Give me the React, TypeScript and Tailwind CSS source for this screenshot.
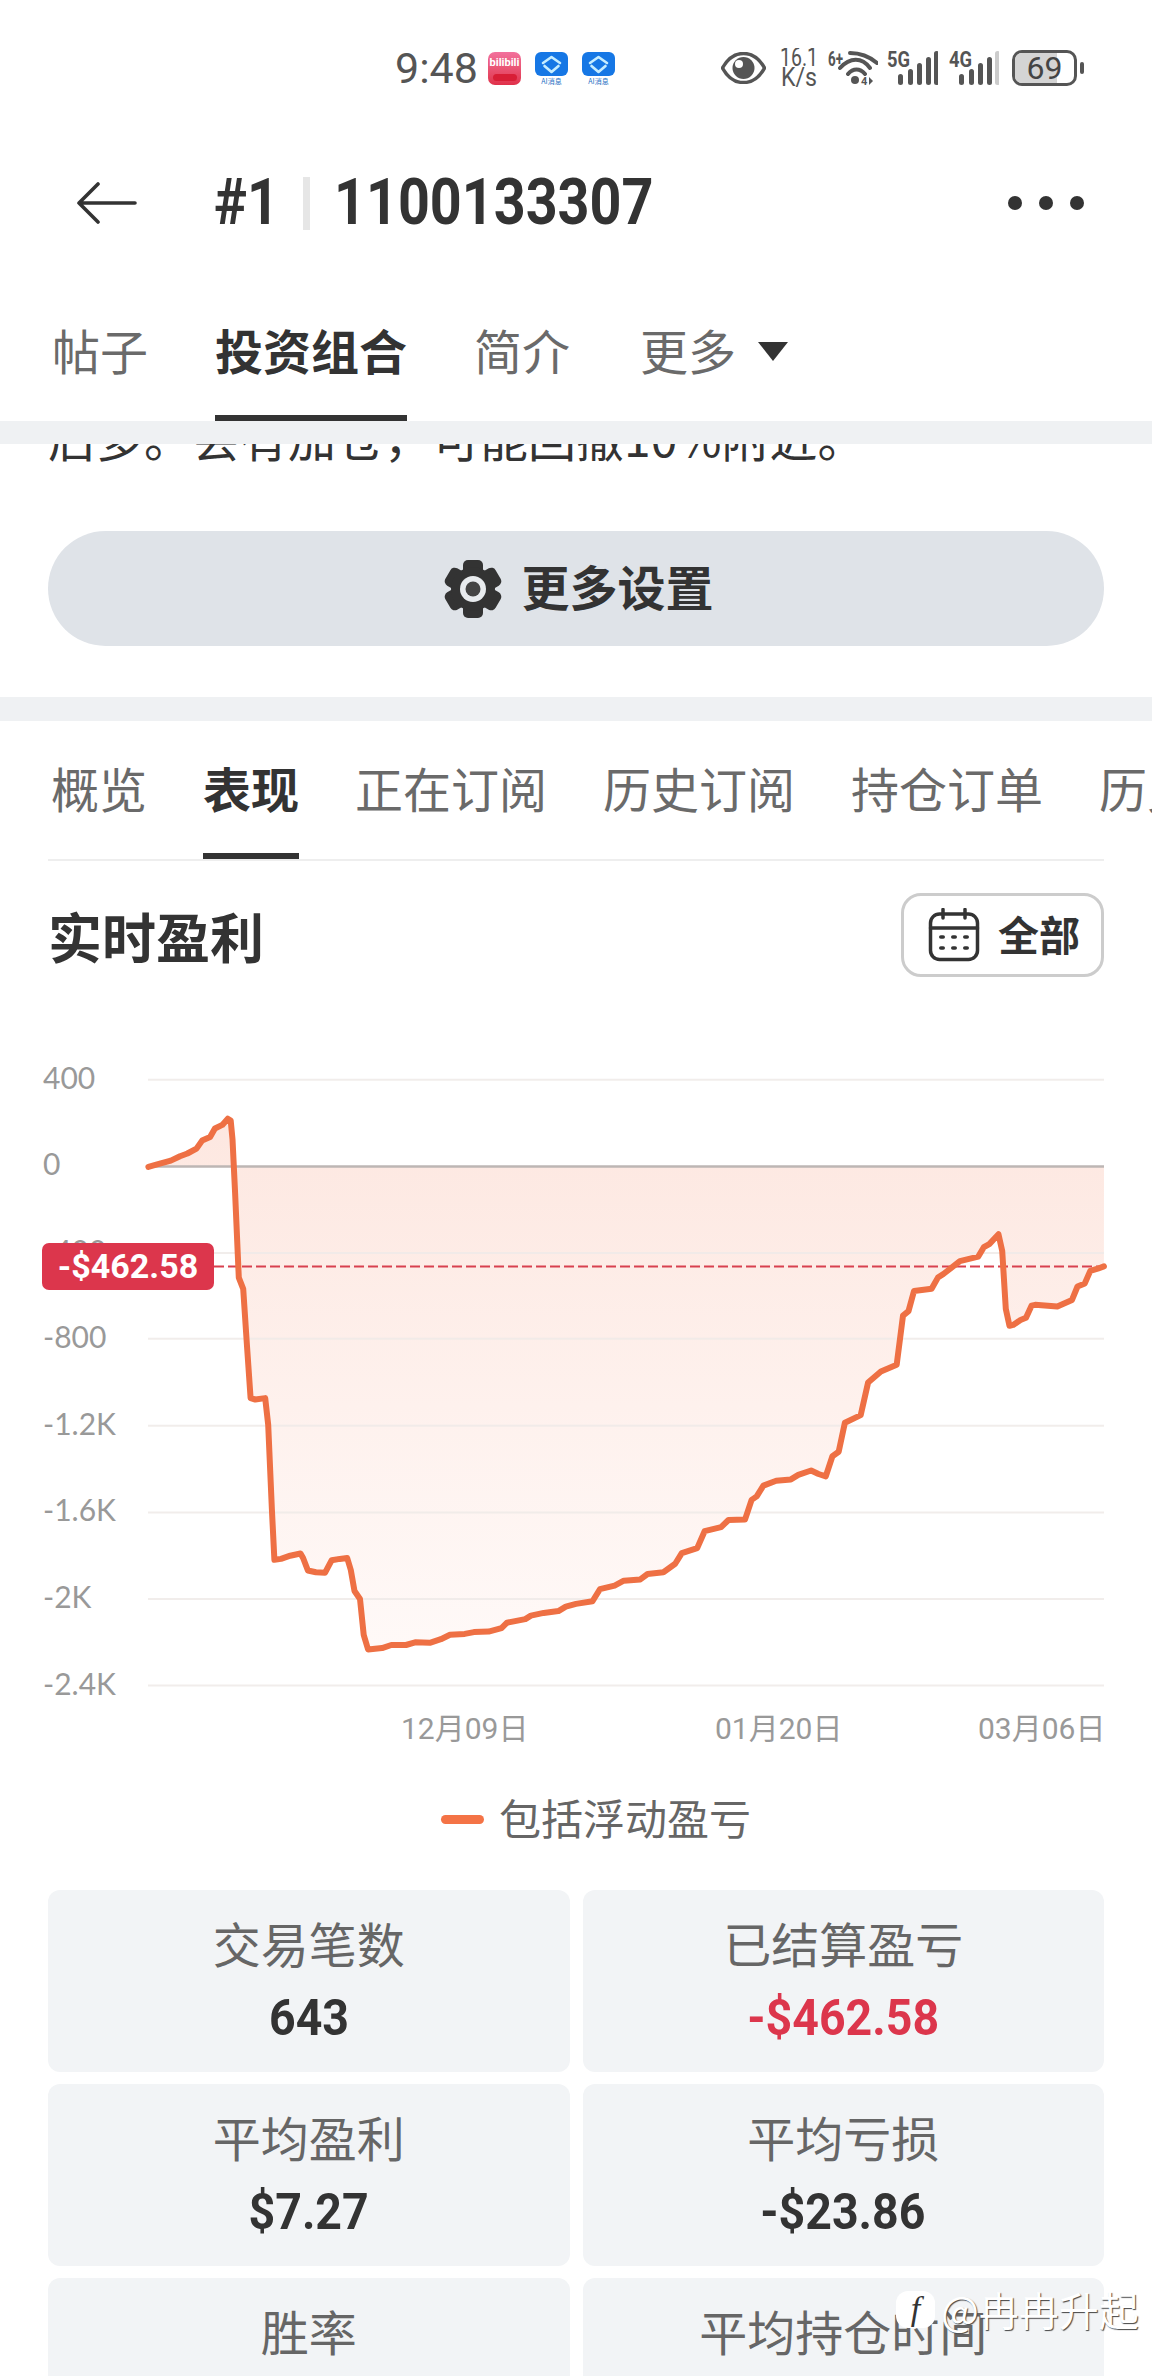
const CJK = "font-['Noto_Sans_CJK_SC','Noto_Sans',sans-serif]"

// Points read off the reference, in crop coordinates
const LEFT_PTS = [
  [404, 282], [430, 276], [465, 268], [490, 258], [510, 252], [535, 241], [550, 223], [572, 215], [585, 196], [605, 188],
  [620, 174], [628, 178], [633, 220], [640, 340], [650, 530], [662, 555], [672, 680], [682, 800], [695, 803], [722, 800],
  [730, 860], [740, 1050], [747, 1162], [765, 1160], [790, 1153], [818, 1148], [825, 1158], [838, 1186], [860, 1190], [885, 1191],
  [903, 1163], [925, 1160], [945, 1158], [955, 1185], [965, 1232], [980, 1250], [990, 1330], [1002, 1363], [1040, 1360], [1065, 1353],
  [1105, 1353], [1130, 1347], [1170, 1348], [1200, 1340], [1225, 1330], [1265, 1328], [1290, 1324], [1330, 1323], [1365, 1315], [1380, 1303],
  [1430, 1295], [1445, 1287], [1480, 1281], [1520, 1277], [1540, 1267],
]
const RIGHT_PTS = [
  [0, 1261], [45, 1255], [65, 1228], [105, 1220], [130, 1209], [175, 1206], [195, 1194], [238, 1190], [270, 1171], [288, 1147],
  [330, 1136], [350, 1098], [395, 1089], [415, 1073], [460, 1072], [478, 1028], [492, 1020], [510, 996], [545, 985], [585, 982],
  [605, 972], [640, 962], [660, 970], [680, 975], [698, 930], [715, 920], [732, 855], [775, 838], [795, 765], [830, 740],
  [873, 725], [890, 615], [905, 605], [920, 560], [968, 555], [985, 530], [1000, 522], [1045, 493], [1095, 483], [1110, 462],
  [1125, 455], [1150, 433], [1160, 470], [1170, 600], [1180, 638], [1190, 636], [1210, 625], [1225, 620], [1240, 593], [1250, 591],
  [1310, 595], [1350, 580], [1365, 550], [1385, 543], [1400, 515], [1420, 510], [1437, 505],
]

const line = [
  ...LEFT_PTS.map(([x, y]) => [x / 2.722, y / 2.24 - 20]),
  ...RIGHT_PTS.map(([x, y]) => [576 + x / 2.722, y / 2.24 - 20]),
]
const linePts = line.map(([x, y]) => `${x.toFixed(1)},${y.toFixed(1)}`).join(" ")
const ZERO_Y = 105.4
const areaPts = `${linePts} 1104,${ZERO_Y} 148,${ZERO_Y}`

const GRID = [
  { y: 18.8, label: "400" },
  { y: 105.4, label: "0" },
  { y: 192, label: "-400" },
  { y: 277.8, label: "-800" },
  { y: 364.8, label: "-1.2K" },
  { y: 451.4, label: "-1.6K" },
  { y: 538, label: "-2K" },
  { y: 624.6, label: "-2.4K" },
]

function Bars({ dim }: { dim?: boolean }) {
  const xs = [2, 12, 21, 30, 38]
  const hs = [11, 16, 22, 28, 34]
  return (
    <svg width="42" height="36" viewBox="0 0 42 36">
      {xs.map((x, i) => (
        <rect key={x} x={x} y={35 - hs[i]} width="5" height={hs[i]} rx="2.5" fill={dim && i === 4 ? "#ccc" : "#555"} />
      ))}
    </svg>
  )
}

function StatusBar() {
  return (
    <div className="flex h-[136px] items-center pl-[395px] text-[#555]">
      <span className="w-[80px] font-['Roboto',sans-serif] text-[43px] leading-none">9:48</span>
      <div className="ml-[13px] flex h-[33px] w-[33px] flex-col items-center overflow-hidden rounded-[7px] bg-gradient-to-b from-[#f2709c] to-[#e0304a]">
        <span className="mt-[5px] font-['Roboto',sans-serif] text-[11px] leading-[12px] font-bold text-white">bilibili</span>
        <span className="mt-[5px] h-[7px] w-[24px] rounded-sm bg-[#d81e36]" />
      </div>
      {[0, 1].map((i) => (
        <div key={i} className="ml-[14px] flex h-[33px] w-[33px] flex-col items-center">
          <svg width="33" height="24" viewBox="0 0 33 24">
            <rect width="33" height="24" rx="6" fill="#1677e5" />
            <path d="M8 11 16.5 5 25 11M9.5 14 16.5 20 23.5 14" fill="none" stroke="#c6edff" strokeWidth="2.6" strokeLinecap="round" strokeLinejoin="round" />
          </svg>
          <span className={`${CJK} mt-[1px] text-[7px] leading-[8px] whitespace-nowrap text-[#1f6fc4]`}>AI消息</span>
        </div>
      ))}
      <svg className="ml-[106px]" width="45" height="32" viewBox="0 0 45 32">
        <path d="M1.5 16C7 6 14 1.5 22.5 1.5S38 6 43.5 16C38 26 31 30.5 22.5 30.5S7 26 1.5 16Z" fill="none" stroke="#555" strokeWidth="3.5" strokeLinejoin="round" />
        <circle cx="22.5" cy="16" r="11" fill="#555" />
        <circle cx="18" cy="12" r="4" fill="#fff" />
      </svg>
      <svg className="ml-[14px]" width="38" height="40" viewBox="0 0 38 40">
        <text x="0" y="18" fontSize="25" fontFamily="Roboto, sans-serif" textLength="38" lengthAdjust="spacingAndGlyphs" fill="#555">16.1</text>
        <text x="1" y="38" fontSize="25" fontFamily="Roboto, sans-serif" textLength="36" lengthAdjust="spacingAndGlyphs" fill="#555">K/s</text>
      </svg>
      <svg className="ml-[10px]" width="50" height="36" viewBox="0 0 50 36">
        <text x="0" y="16" fontSize="20" fontWeight="700" fontFamily="Roboto, sans-serif" textLength="15" lengthAdjust="spacingAndGlyphs" fill="#555">6+</text>
        <path d="M22 3C32 3 42 7 49 13M12 18C22 7 34 7 42 18M20 24C25 18 32 18 37 24" fill="none" stroke="#555" strokeWidth="4" strokeLinecap="round" />
        <circle cx="27" cy="30" r="4" fill="#555" />
        <text x="33" y="35" fontSize="11" fontWeight="700" fontFamily="Roboto, sans-serif" fill="#555">4</text>
        <path d="M41 27v8l4-4z" fill="#555" />
      </svg>
      <div className="relative ml-[9px] h-[36px] w-[52px]">
        <div className="absolute top-0 left-[9px]"><Bars /></div>
        <svg className="absolute top-0 left-0" width="26" height="20" viewBox="0 0 26 20">
          <text x="0" y="17" fontSize="22" fontWeight="700" fontFamily="Roboto, sans-serif" textLength="23" lengthAdjust="spacingAndGlyphs" fill="#555">5G</text>
        </svg>
      </div>
      <div className="relative ml-[10px] h-[36px] w-[50px]">
        <div className="absolute top-0 left-[8px]"><Bars dim /></div>
        <svg className="absolute top-0 left-0" width="26" height="20" viewBox="0 0 26 20">
          <text x="0" y="17" fontSize="22" fontWeight="700" fontFamily="Roboto, sans-serif" textLength="23" lengthAdjust="spacingAndGlyphs" fill="#555">4G</text>
        </svg>
      </div>
      <div className="relative ml-[13px] flex h-[36px] w-[65px] items-center justify-center overflow-hidden rounded-[10px] border-[3px] border-[#555]">
        <span className="absolute top-0 bottom-0 left-0 w-[42px] bg-[#d4d4d4]" />
        <span className="relative font-['Roboto',sans-serif] text-[32px] leading-none text-[#444]">69</span>
      </div>
      <span className="ml-[3px] h-[12px] w-[4px] rounded-sm bg-[#555]" />
    </div>
  )
}

function Header() {
  return (
    <div className="flex h-[134px] items-center pr-[68px] pl-[77px] text-[#333]">
      <svg className="shrink-0" width="60" height="42" viewBox="0 0 60 42">
        <path d="M21 2 2 21 21 40M2 21H58" fill="none" stroke="#333" strokeWidth="3.6" strokeLinecap="round" strokeLinejoin="round" />
      </svg>
      <span className="ml-[77px] w-[64px] origin-left scale-x-[0.87] font-['Roboto',sans-serif] text-[64px] leading-none font-bold whitespace-nowrap">#1</span>
      <span className="mr-[24px] ml-[25px] h-[53px] w-[7px] bg-[#e6e6e6]" />
      <span className="w-[314px] origin-left scale-x-[0.87] font-['Roboto',sans-serif] text-[64px] leading-none font-bold whitespace-nowrap">1100133307</span>
      <div className="ml-auto flex gap-[17px]">
        <span className="h-[14px] w-[14px] rounded-full bg-[#333]" />
        <span className="h-[14px] w-[14px] rounded-full bg-[#333]" />
        <span className="h-[14px] w-[14px] rounded-full bg-[#333]" />
      </div>
    </div>
  )
}

function ProfileTabs() {
  return (
    <div className={`${CJK} flex items-start gap-[67px] pt-[46px] pl-[52px] text-[48px] leading-[66px] text-[#6a6a6a]`}>
      <span>帖子</span>
      <div className="flex flex-col">
        <span className="font-bold text-[#333]">投资组合</span>
        <span className="mt-[33px] h-[6px] bg-[#333]" />
      </div>
      <span>简介</span>
      <div className="ml-[3px] flex items-center">
        <span>更多</span>
        <svg className="mt-[4px] ml-[21px]" width="32" height="20" viewBox="0 0 32 20">
          <path d="M1 1H31L16 20Z" fill="#333" />
        </svg>
      </div>
    </div>
  )
}

function Gear() {
  return (
    <svg width="60" height="60" viewBox="0 0 60 60">
      {[0, 60, 120].map((a) => (
        <rect key={a} x="20" y="1" width="20" height="58" rx="5" fill="#333" transform={`rotate(${a} 30 30)`} />
      ))}
      <circle cx="30" cy="30" r="22" fill="#333" />
      <circle cx="30" cy="30" r="13" fill="#e8ebee" />
      <circle cx="30" cy="30" r="7.5" fill="#444" />
    </svg>
  )
}

function SectionTabs() {
  const items = ["概览", "表现", "正在订阅", "历史订阅", "持仓订单", "历史订单"]
  return (
    <div className="mx-[48px] border-b-2 border-[#eeeeee]">
      <div className={`${CJK} flex w-[1200px] items-start gap-[56px] pt-[33px] pl-[3px] text-[48px] leading-[66px] text-[#6a6a6a]`}>
        {items.map((t) =>
          t === "表现" ? (
            <div key={t} className="flex shrink-0 flex-col">
              <span className="font-bold text-[#333]">{t}</span>
              <span className="mt-[33px] h-[6px] bg-[#333]" />
            </div>
          ) : (
            <span key={t} className="shrink-0">{t}</span>
          ),
        )}
      </div>
    </div>
  )
}

function Chart() {
  return (
    <div className="relative mt-[84px] h-[690px]">
      <svg className="block" width="1152" height="690" viewBox="0 0 1152 690">
        <defs>
          <linearGradient id="pnl" gradientUnits="userSpaceOnUse" x1="0" y1="50" x2="0" y2="640">
            <stop offset="0" stopColor="#fde7e0" />
            <stop offset="1" stopColor="#fffbfa" />
          </linearGradient>
        </defs>
        <polygon points={areaPts} fill="url(#pnl)" />
        {GRID.map((g) => (
          <g key={g.label}>
            <line
              x1="148"
              x2="1104"
              y1={g.y}
              y2={g.y}
              stroke={g.y === ZERO_Y ? "#bdb6b4" : "#eeeae8"}
              strokeOpacity={g.y === ZERO_Y ? 1 : 0.85}
              strokeWidth={g.y === ZERO_Y ? 2.5 : 2}
            />
            <text x="43" y={g.y + 9} fontSize="30" fontFamily="Lato, Roboto, sans-serif" fill="#999">
              {g.label}
            </text>
          </g>
        ))}
        <line x1="214" x2="1104" y1="205.5" y2="205.5" stroke="#d8404f" strokeWidth="2" strokeDasharray="10 4" />
        <polyline points={linePts} fill="none" stroke="#ee7044" strokeWidth="6" strokeLinejoin="round" strokeLinecap="round" />
        <text x="401" y="678" fontSize="30" fontFamily="Roboto, 'Noto Sans CJK SC', sans-serif" fill="#999">12月09日</text>
        <text x="715" y="678" fontSize="30" fontFamily="Roboto, 'Noto Sans CJK SC', sans-serif" fill="#999">01月20日</text>
        <text x="978" y="678" fontSize="30" fontFamily="Roboto, 'Noto Sans CJK SC', sans-serif" fill="#999">03月06日</text>
      </svg>
      <div className="absolute top-[182px] left-[42px] flex h-[47px] w-[172px] items-center justify-center rounded-[7px] bg-[#dc364c] font-['Roboto',sans-serif] text-[34px] font-bold text-white">
        -$462.58
      </div>
    </div>
  )
}

const STATS = [
  { label: "交易笔数", value: "643" },
  { label: "已结算盈亏", value: "-$462.58", red: true },
  { label: "平均盈利", value: "$7.27" },
  { label: "平均亏损", value: "-$23.86" },
  { label: "胜率" },
  { label: "平均持仓时间" },
]

function StatCard({ label, value, red }: { label: string; value?: string; red?: boolean }) {
  return (
    <div className="flex h-[182px] flex-col items-center rounded-[12px] bg-[#f2f4f6] pt-[19px]">
      <span className={`${CJK} text-[48px] leading-[66px] text-[#666]`}>{label}</span>
      {value && (
        <span className={`mt-[15px] scale-x-[0.93] font-['Roboto',sans-serif] text-[50px] leading-[56px] font-bold ${red ? "text-[#dc364c]" : "text-[#333]"}`}>
          {value}
        </span>
      )}
    </div>
  )
}

export default function App() {
  return (
    <div className="relative h-[2376px] w-[1152px] overflow-hidden bg-white">
      <StatusBar />
      <Header />
      <ProfileTabs />
      <div className="h-[23px] bg-[#eff1f3]" />

      <div className="relative h-[253px] overflow-hidden">
        <p className={`${CJK} mt-[-41px] pl-[48px] text-[48px] leading-[66px] whitespace-nowrap text-[#333]`}>
          后多。会有加仓，可能回撤10%附近。
        </p>
        <div className="mx-[48px] mt-[62px] flex h-[115px] items-center justify-center gap-[18px] rounded-full bg-[#dfe3e8] pl-[5px]">
          <Gear />
          <span className={`${CJK} pb-[8px] text-[48px] font-bold text-[#333]`}>更多设置</span>
        </div>
      </div>
      <div className="h-[24px] bg-[#eff1f3]" />

      <SectionTabs />

      <div className="mx-[48px] mt-[32px] flex h-[84px] items-center justify-between">
        <span className={`${CJK} text-[54px] font-bold text-[#333]`}>实时盈利</span>
        <div className="flex h-[84px] w-[203px] items-center gap-[18px] rounded-[20px] border-[3px] border-[#cccccc] pl-[24px]">
          <svg width="52" height="54" viewBox="0 0 52 54">
            <rect x="2.5" y="6" width="47" height="45.5" rx="9" fill="none" stroke="#333" strokeWidth="3.5" />
            <path d="M2.5 20H49.5M15 1.5V10M37 1.5V10" stroke="#333" strokeWidth="3.5" strokeLinecap="round" />
            {[14, 26, 38].map((x) =>
              [29, 40].map((y) => <rect key={`${x}-${y}`} x={x - 3} y={y - 1.8} width="6" height="3.6" rx="1.8" fill="#333" />),
            )}
          </svg>
          <span className={`${CJK} pb-[2px] text-[41px] font-bold text-[#333]`}>全部</span>
        </div>
      </div>

      <Chart />

      <div className="mt-[39px] flex h-[58px] items-center justify-center gap-[15px] pl-[40px]">
        <span className="h-[9px] w-[43px] rounded-full bg-[#f47346]" />
        <span className={`${CJK} pb-[5px] text-[42px] text-[#666]`}>包括浮动盈亏</span>
      </div>

      <div className="mx-[48px] mt-[42px] grid grid-cols-2 gap-x-[13px] gap-y-[12px]">
        {STATS.map((s) => (
          <StatCard key={s.label} {...s} />
        ))}
      </div>

      {/* Watermark over the last card */}
      <div className="absolute top-[2286px] left-[896px] flex items-center">
        <div className="flex h-[37px] w-[39px] items-center justify-center rounded-[12px] bg-white">
          <span className="font-['Liberation_Serif',serif] text-[34px] leading-none text-[#333] italic">f</span>
        </div>
        <span className={`${CJK} ml-[6px] text-[40px] leading-[46px] whitespace-nowrap text-white [text-shadow:1px_1px_1px_#444]`}>
          @冉冉升起
        </span>
      </div>
    </div>
  )
}
